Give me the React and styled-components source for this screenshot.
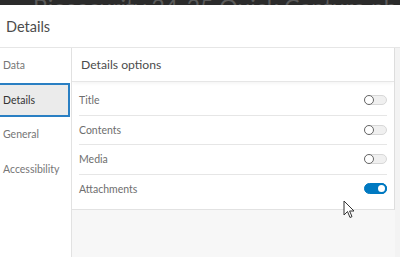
import React from "react";
import styled, { createGlobalStyle } from "styled-components";

const GlobalStyle = createGlobalStyle`
  html, body {
    margin: 0;
    padding: 0;
    overflow: hidden;
    background: #ffffff;
  }
  body {
    font-family: "Lato", "Open Sans", sans-serif;
  }
`;

const Screen = styled.div`
  position: relative;
  width: 400px;
  height: 257px;
  display: flex;
  flex-direction: column;
  overflow: hidden;
`;

// dimmed app header peeking out behind the modal
const AppBar = styled.div`
  height: 5px;
  max-height: 5px;
  flex: none;
  background: #2b2b2b;
  display: flex;
  align-items: flex-start;
  gap: 17px;
  padding-left: 16px;
  overflow: hidden;
  contain: paint;
`;
const AppIcon = styled.div`
  width: 19px;
  height: 20px;
  margin-top: -2px;
  background: #4a3b22;
  border-radius: 2px;
`;
const AppTitle = styled.div`
  font-size: 23px;
  line-height: 23px;
  margin-top: -4px;
  color: #5a5a5a;
  white-space: nowrap;
`;

const Modal = styled.div`
  position: relative;
  z-index: 1;
  flex: 1;
  display: flex;
  flex-direction: column;
  background: #fff;
  min-height: 0;
`;

const ModalHeader = styled.div`
  height: 42px;
  flex: none;
  display: flex;
  align-items: center;
  padding-left: 6px;
  border-bottom: 1px solid #e6e6e6;
  font-size: 14.5px;
  color: #4c4c4c;
`;

const Body = styled.div`
  flex: 1;
  display: flex;
  min-height: 0;
`;

const Sidebar = styled.nav`
  width: 71px;
  flex: none;
  display: flex;
  flex-direction: column;
`;

const NavItem = styled.div`
  height: 34.5px;
  box-sizing: border-box;
  display: flex;
  align-items: center;
  padding-left: 3px;
  font-size: 10.5px;
  color: ${(p) => (p.$active ? "#333333" : "#767676")};
  background: ${(p) => (p.$active ? "#ebebeb" : "transparent")};
  border: 2px solid ${(p) => (p.$active ? "#2a7fc3" : "transparent")};
  margin-left: -2px;
  margin-right: 1px;
`;

const Content = styled.div`
  flex: 1;
  display: flex;
  background: #f7f7f7;
  border-left: 1px solid #e2e2e2;
`;

const Panel = styled.section`
  width: 322px;
  flex: none;
  align-self: flex-start;
  background: #fff;
  border-right: 1px solid #dedede;
  border-bottom: 1px solid #e2e2e2;
`;

const PanelHeader = styled.div`
  height: 34px;
  box-sizing: border-box;
  display: flex;
  align-items: center;
  padding-left: 9px;
  font-size: 12.2px;
  color: #4c4c4c;
  border-bottom: 1px solid #e6e6e6;
  box-shadow: 0 3px 3px -1px rgba(0, 0, 0, 0.04);
`;

const List = styled.div`
  padding: 4px 7px 5px 7px;
`;

const Row = styled.div`
  height: 29.5px;
  box-sizing: border-box;
  display: flex;
  align-items: center;
  justify-content: space-between;
  font-size: 10.5px;
  color: #6e6e6e;
  border-bottom: 1px solid ${(p) => (p.$last ? "transparent" : "#e6e6e6")};
`;

const Track = styled.span`
  position: relative;
  width: 23px;
  height: ${(p) => (p.$on ? "11px" : "10px")};
  box-sizing: border-box;
  border-radius: 6px;
  background: ${(p) => (p.$on ? "#0079c1" : "#f0f0f0")};
  border: 1px solid ${(p) => (p.$on ? "#0079c1" : "#d8d8d8")};
`;

const Knob = styled.span`
  position: absolute;
  top: -1px;
  ${(p) => (p.$on ? "right: -1px;" : "left: -1px;")}
  width: ${(p) => (p.$on ? "11px" : "10px")};
  height: ${(p) => (p.$on ? "11px" : "10px")};
  box-sizing: border-box;
  border-radius: 50%;
  background: #fff;
  border: ${(p) => (p.$on ? "2px solid #0079c1" : "1.6px solid #666")};
`;

const Scroll = styled.div`
  flex: 1;
  background: #f3f3f3;
`;

const Cursor = styled.svg`
  position: absolute;
  z-index: 2;
  left: 343px;
  top: 200px;
`;

const Toggle = ({ on }) => (
  <Track $on={on}>
    <Knob $on={on} />
  </Track>
);

const navItems = ["Data", "Details", "General", "Accessibility"];
const options = [
  { label: "Title", on: false },
  { label: "Contents", on: false },
  { label: "Media", on: false },
  { label: "Attachments", on: true },
];

export default function App() {
  return (
    <Screen>
      <GlobalStyle />
      <AppBar>
        <AppIcon />
        <AppTitle>Biosecurity 24-25 Quick Capture photo list</AppTitle>
      </AppBar>
      <Modal>
        <ModalHeader>Details</ModalHeader>
        <Body>
          <Sidebar>
            {navItems.map((n) => (
              <NavItem key={n} $active={n === "Details"}>
                {n}
              </NavItem>
            ))}
          </Sidebar>
          <Content>
            <Panel>
              <PanelHeader>Details options</PanelHeader>
              <List>
                {options.map((o, i) => (
                  <Row key={o.label} $last={i === options.length - 1}>
                    {o.label}
                    <Toggle on={o.on} />
                  </Row>
                ))}
              </List>
            </Panel>
            <Scroll />
          </Content>
        </Body>
      </Modal>
      <Cursor width="12" height="19" viewBox="0 0 12 19">
        <path
          d="M1 1 L1 15 L4.5 11.5 L7 17.5 L9 16.6 L6.6 11 L11 11 Z"
          fill="#fff"
          stroke="#333"
          strokeWidth="1"
          strokeLinejoin="round"
        />
      </Cursor>
    </Screen>
  );
}
